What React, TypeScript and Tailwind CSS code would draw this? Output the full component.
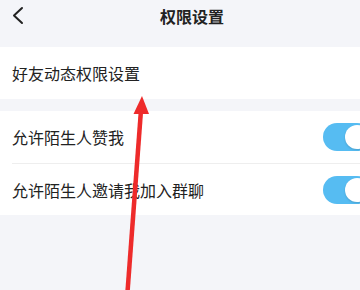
const font = { fontFamily: '"Noto Sans CJK SC", "Noto Sans", sans-serif' };

function Toggle() {
    return (
        <div className="shrink-0 w-[48px] h-[28px] rounded-full bg-[#56bcf2] flex items-center justify-end pr-[2px] -mr-[11px]">
            <div className="w-[24px] h-[24px] rounded-full bg-white shadow-[0_1px_2px_rgba(0,0,0,0.15)]"></div>
        </div>
    );
}

export default function App() {
    const rows = ['允许陌生人赞我', '允许陌生人邀请我加入群聊'];

    return (
        <div className="relative w-[360px] h-[290px] overflow-hidden bg-[#f4f5f9] text-[#222]" style={font}>
            {/* Header */}
            <div className="relative h-[31px] mb-[16px] flex items-center justify-center">
                <svg className="absolute left-[11px] top-[6px]" width="14" height="19" viewBox="0 0 14 19">
                    <polyline points="11,2 3,9.5 11,17" fill="none" stroke="#222" strokeWidth="2" strokeLinecap="round" strokeLinejoin="round" />
                </svg>
                <span className="ml-[24px] text-[16px] font-semibold text-[#222]">权限设置</span>
            </div>

            <div className="bg-white h-[52px] flex items-center px-3">
                <span className="text-[16px]">好友动态权限设置</span>
            </div>

            <div className="mt-[12px] bg-white">
                {rows.map((label, i) => (
                    <div key={label} className="pl-3">
                        <div className={`h-[52px] flex items-center justify-between ${i > 0 ? 'border-t border-[#eeeeee]' : ''}`}>
                            <span className="text-[16px]">{label}</span>
                            <Toggle />
                        </div>
                    </div>
                ))}
            </div>

            {/* Red arrow annotation */}
            <svg className="absolute inset-0 pointer-events-none" width="360" height="290" viewBox="0 0 360 290">
                <line x1="127.5" y1="292" x2="141" y2="110" stroke="#ee2b2b" strokeWidth="4.5" />
                <polygon points="142,96 133.5,114 149,114" fill="#ee2b2b" />
            </svg>
        </div>
    );
}
